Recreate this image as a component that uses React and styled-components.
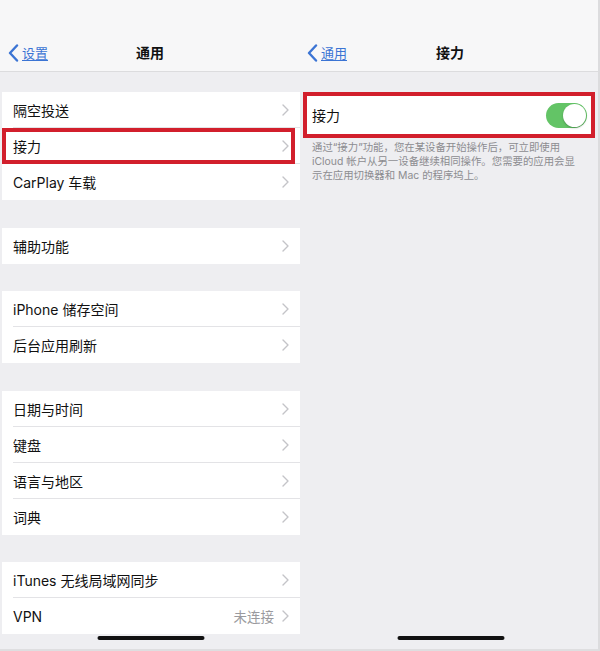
import React from "react";
import styled, { createGlobalStyle } from "styled-components";

const Global = createGlobalStyle`
  html, body { margin: 0; padding: 0; background: #efeff4; }
  body { font-family: Inter, "Noto Sans CJK SC", sans-serif; -webkit-font-smoothing: antialiased; }
`;

const Page = styled.div`
  display: flex;
  width: 600px;
  height: 651px;
  box-sizing: border-box;
  border-right: 2px solid #dcdcde;
  border-bottom: 2px solid #dedee0;
  background: #eeeef1;
  overflow: hidden;
`;

const Panel = styled.div`
  position: relative;
  width: ${(p) => p.$w}px;
  display: flex;
  flex-direction: column;
  background: #eeeef1;
`;

const NavBar = styled.div`
  position: relative;
  height: 72px;
  box-sizing: border-box;
  background: #f7f7f8;
  border-bottom: 1px solid #dcdcde;
  display: flex;
  align-items: flex-end;
  justify-content: center;
  padding-bottom: 9px;
`;

const Title = styled.div`
  font-size: 14px;
  font-weight: 600;
  color: #111;
  line-height: 18px;
  margin-left: ${(p) => p.$shift || 0}px;
`;

const Back = styled.div`
  position: absolute;
  left: ${(p) => p.$left}px;
  bottom: 9px;
  display: flex;
  align-items: center;
  gap: 3px;
  color: #3b74d4;
  font-size: 13px;
  line-height: 18px;
  span {
    text-decoration: underline;
    text-underline-offset: 2px;
    text-decoration-thickness: 1px;
  }
`;

const Group = styled.div`
  margin-top: ${(p) => p.$top}px;
  margin-left: 2px;
  background: #fff;
  display: flex;
  flex-direction: column;
`;

const Row = styled.div`
  position: relative;
  height: 36px;
  display: flex;
  align-items: center;
  padding: 0 11px 0 11px;
  font-size: 14px;
  color: #111;
  &:not(:last-child)::after {
    content: "";
    position: absolute;
    left: 11px;
    right: 0;
    bottom: 0;
    height: 1px;
    background: #e3e3e6;
  }
`;

const Label = styled.div`
  flex: 1;
  white-space: nowrap;
`;

const Detail = styled.div`
  color: #9a9a9e;
  font-size: 13.5px;
  margin-right: 8px;
`;

const Highlight = styled.div`
  position: absolute;
  top: 0;
  bottom: 0;
  left: 0;
  right: 5px;
  border: 4px solid #d21f2c;
  pointer-events: none;
  z-index: 2;
`;

const Framed = styled.div`
  margin: 20px 3px 0 3px;
  border: 4px solid #d21f2c;
  background: #fff;
  height: 38px;
  box-sizing: content-box;
  display: flex;
  align-items: center;
  padding: 0 4px 0 5px;
  font-size: 14px;
  color: #111;
`;

const ToggleTrack = styled.div`
  position: relative;
  width: 41px;
  height: 25px;
  border-radius: 13px;
  background: #63c466;
  flex-shrink: 0;
`;

const Knob = styled.div`
  position: absolute;
  right: 1px;
  top: 1px;
  width: 23px;
  height: 23px;
  border-radius: 50%;
  background: #fff;
  box-shadow: 0 1px 2px rgba(0, 0, 0, 0.25);
`;

const Note = styled.div`
  margin: 3px 0 0 12px;
  font-size: 10.4px;
  line-height: 14px;
  color: #8c8c90;
  white-space: nowrap;
`;

const HomeBar = styled.div`
  position: absolute;
  bottom: 9px;
  left: 50%;
  transform: translateX(-50%);
  margin-left: ${(p) => p.$shift || 0}px;
  width: 107px;
  height: 4px;
  border-radius: 2px;
  background: #111;
`;

const Chevron = () => (
  <svg width="7" height="12" viewBox="0 0 7 12" fill="none">
    <path d="M1 1l5 5-5 5" stroke="#c4c4c8" strokeWidth="1.4" strokeLinecap="round" strokeLinejoin="round" />
  </svg>
);

const BackChevron = () => (
  <svg width="11" height="18" viewBox="0 0 11 18" fill="none">
    <path d="M9 1.5L2 9l7 7.5" stroke="#3b74d4" strokeWidth="2.4" strokeLinecap="round" strokeLinejoin="round" />
  </svg>
);

const groups = [
  { top: 20, items: [{ t: "隔空投送" }, { t: "接力", hl: true }, { t: "CarPlay 车载" }] },
  { top: 28, items: [{ t: "辅助功能" }] },
  { top: 27, items: [{ t: "iPhone 储存空间" }, { t: "后台应用刷新" }] },
  { top: 28, items: [{ t: "日期与时间" }, { t: "键盘" }, { t: "语言与地区" }, { t: "词典" }] },
  { top: 27, items: [{ t: "iTunes 无线局域网同步" }, { t: "VPN", d: "未连接" }] },
];

export default function App() {
  return (
    <>
      <Global />
      <Page>
        <Panel $w={300}>
          <NavBar>
            <Back $left={8}>
              <BackChevron />
              <span>设置</span>
            </Back>
            <Title>通用</Title>
          </NavBar>
          {groups.map((g, i) => (
            <Group key={i} $top={g.top}>
              {g.items.map((it) => (
                <Row key={it.t}>
                  <Label>{it.t}</Label>
                  {it.d && <Detail>{it.d}</Detail>}
                  <Chevron />
                  {it.hl && <Highlight />}
                </Row>
              ))}
            </Group>
          ))}
          <HomeBar $shift={1} />
        </Panel>
        <Panel $w={298}>
          <NavBar>
            <Back $left={7}>
              <BackChevron />
              <span>通用</span>
            </Back>
            <Title $shift={2}>接力</Title>
          </NavBar>
          <Framed>
            <Label>接力</Label>
            <ToggleTrack>
              <Knob />
            </ToggleTrack>
          </Framed>
          <Note>
            通过“接力”功能，您在某设备开始操作后，可立即使用
            <br />
            iCloud 帐户从另一设备继续相同操作。您需要的应用会显
            <br />
            示在应用切换器和 Mac 的程序坞上。
          </Note>
          <HomeBar $shift={2} />
        </Panel>
      </Page>
    </>
  );
}
